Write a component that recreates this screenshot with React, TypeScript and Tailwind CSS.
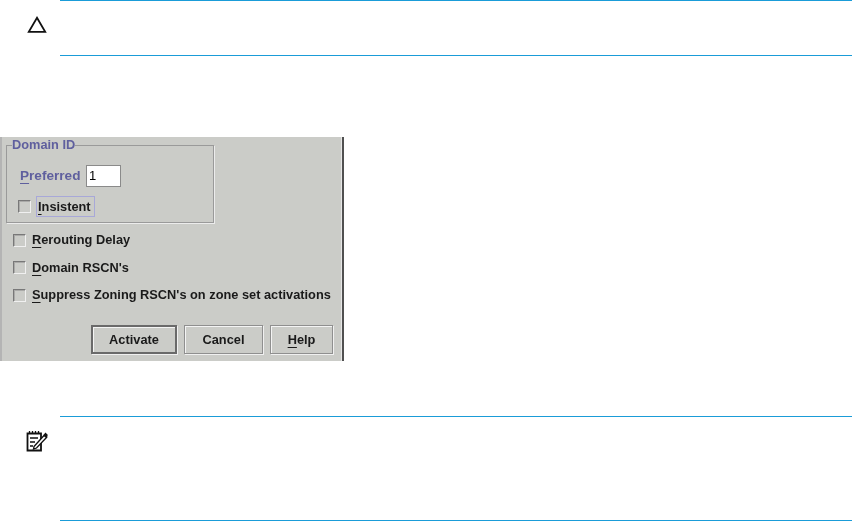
function Check({ label, hot, focus }: { label: string; hot: string; focus?: boolean }) {
  const rest = label.slice(hot.length)
  return (
    <div className="flex items-center">
      <span className="w-[13px] h-[13px] bg-[#cbccc8] border border-[#787878] border-r-[#f0f0f0] border-b-[#f0f0f0] shadow-[inset_1px_1px_0_#aaaaa8]" />
      <span className={focus ? "ml-[5px] pl-[1px] w-[59px] border border-[#a8a8d8] leading-[19px] h-[21px]" : "ml-[6px] leading-[18px]"}>
        <span className="underline underline-offset-[3px] decoration-1">{hot}</span>
        {rest}
      </span>
    </div>
  )
}

function DialogButton({ width, active, children }: { width: string; active?: boolean; children: React.ReactNode }) {
  return (
    <div
      className={
        width +
        " h-[29px] flex items-center justify-center " +
        (active
          ? "border-2 border-[#6a6a6a] shadow-[inset_1px_1px_0_#f4f4f4,1px_1px_0_#f0f0f0]"
          : "border border-[#8f8f8f] shadow-[inset_1px_1px_0_#f4f4f4,1px_1px_0_#f0f0f0]")
      }
    >
      {children}
    </div>
  )
}

function Dialog() {
  return (
    <div className="w-[344px] h-[224px] mt-[81px] bg-[#cbccc8] border-l-2 border-l-[#b4b4b4] border-r-2 border-r-[#505050] shadow-[inset_-1px_0_0_#e6e6e6] font-['Liberation_Sans',sans-serif] font-bold text-[12.8px] text-[#1a1a1a] flex flex-col blur-[0.35px]">
      <div className="relative ml-[4px] mt-[8px] w-[208px] h-[78px] border border-[#9a9a9a] shadow-[1px_1px_0_#ececec]">
        <span className="absolute -top-[8px] left-[5px] bg-[#cbccc8] leading-[14px] text-[#5f5f9e]">Domain ID</span>
        <div className="flex items-center ml-[13px] mt-[19px]">
          <span className="text-[#5f5f9e] text-[13.6px] w-[66px]">
            <span className="underline underline-offset-[3px] decoration-1">P</span>referred
          </span>
          <span className="w-[35px] h-[22px] bg-white border border-[#8a8a8a] pl-[2px] font-normal text-[13px] leading-[20px] text-black">1</span>
        </div>
        <div className="ml-[11px] mt-[9px]">
          <Check label="Insistent" hot="I" focus />
        </div>
      </div>
      <div className="flex flex-col gap-[9.5px] ml-[11px] mt-[8px]">
        <Check label="Rerouting Delay" hot="R" />
        <Check label="Domain RSCN's" hot="D" />
        <Check label="Suppress Zoning RSCN's on zone set activations" hot="S" />
      </div>
      <div className="flex justify-end gap-[7px] mr-[9px] mt-auto mb-[7px]">
        <DialogButton width="w-[86px]" active>
          Activate
        </DialogButton>
        <DialogButton width="w-[79px]">Cancel</DialogButton>
        <DialogButton width="w-[63px]">
          <span>
            <span className="underline underline-offset-[3px] decoration-1">H</span>elp
          </span>
        </DialogButton>
      </div>
    </div>
  )
}

export default function App() {
  return (
    <div className="w-[852px] h-[521px] bg-white overflow-hidden flex flex-col">
      <div className="flex h-[56px]">
        <div className="w-[60px] pl-[27px] pt-[16px]">
          <svg width="20" height="18" viewBox="0 0 20 18" fill="none">
            <path d="M10 1.8 L18.2 15.8 H1.8 Z" stroke="#111" strokeWidth="1.8" strokeLinejoin="miter" />
          </svg>
        </div>
        <div className="flex-1 border-y border-[#1a9cd8]" />
      </div>
      <Dialog />
      <div className="flex h-[105px] mt-[55px]">
        <div className="w-[60px] pl-[26px] pt-[14px]">
          <svg width="22" height="22" viewBox="0 0 22 22" fill="none" stroke="#111" strokeWidth="1.3">
            <path d="M1.5 3.5 H15 V20.5 H1.5 Z" strokeWidth="1.8" />
            <path d="M3.5 1 V4 M6.5 1 V4 M9.5 1 V4 M12.5 1 V4" />
            <path d="M4 8 H12 M4 12 H9 M4 16 H7" />
            <path d="M8 16.5 L18 5.5 L20.5 7.5 L10.5 18 L7.5 19 Z" fill="#fff" />
            <path d="M18 5.5 L19.5 3.5 L21 5 L20.5 7.5" fill="#111" />
          </svg>
        </div>
        <div className="flex-1 border-y border-[#1a9cd8]" />
      </div>
    </div>
  )
}
